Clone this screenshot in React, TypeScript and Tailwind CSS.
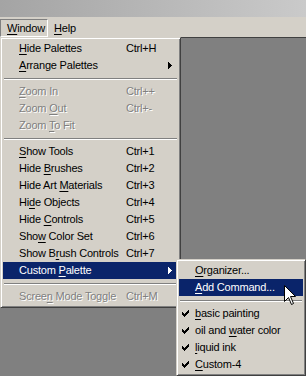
import React from 'react';

type Row =
  | { kind: 'sep' }
  | { kind: 'item'; label: string; key: number; shortcut?: string; arrow?: boolean; disabled?: boolean; active?: boolean };

const mainItems: Row[] = [
  { kind: 'item', label: 'Hide Palettes', key: 0, shortcut: 'Ctrl+H' },
  { kind: 'item', label: 'Arrange Palettes', key: 0, arrow: true },
  { kind: 'sep' },
  { kind: 'item', label: 'Zoom In', key: 0, shortcut: 'Ctrl++', disabled: true },
  { kind: 'item', label: 'Zoom Out', key: 5, shortcut: 'Ctrl+-', disabled: true },
  { kind: 'item', label: 'Zoom To Fit', key: 5, disabled: true },
  { kind: 'sep' },
  { kind: 'item', label: 'Show Tools', key: 0, shortcut: 'Ctrl+1' },
  { kind: 'item', label: 'Hide Brushes', key: 5, shortcut: 'Ctrl+2' },
  { kind: 'item', label: 'Hide Art Materials', key: 9, shortcut: 'Ctrl+3' },
  { kind: 'item', label: 'Hide Objects', key: 2, shortcut: 'Ctrl+4' },
  { kind: 'item', label: 'Hide Controls', key: 5, shortcut: 'Ctrl+5' },
  { kind: 'item', label: 'Show Color Set', key: 3, shortcut: 'Ctrl+6' },
  { kind: 'item', label: 'Show Brush Controls', key: 6, shortcut: 'Ctrl+7' },
  { kind: 'item', label: 'Custom Palette', key: 7, arrow: true, active: true },
  { kind: 'sep' },
  { kind: 'item', label: 'Screen Mode Toggle', key: 5, shortcut: 'Ctrl+M', disabled: true },
];

const subItems: { label: string; key: number; checked?: boolean; active?: boolean; sepAfter?: boolean }[] = [
  { label: 'Organizer...', key: 0 },
  { label: 'Add Command...', key: 0, active: true, sepAfter: true },
  { label: 'basic painting', key: 0, checked: true },
  { label: 'oil and water color', key: 8, checked: true },
  { label: 'liquid ink', key: 0, checked: true },
  { label: 'Custom-4', key: 0, checked: true },
];

// label with its accelerator letter underlined
const Accel = ({ text, at }: { text: string; at: number }) => (
  <span className="whitespace-pre">
    {text.slice(0, at)}
    <span className="underline decoration-1 underline-offset-[2px]">{text[at]}</span>
    {text.slice(at + 1)}
  </span>
);

const Separator = () => (
  <div className="h-[9px] flex items-center px-[1px]">
    <div className="w-full h-[2px] border-t border-t-[#808080] border-b border-b-white" />
  </div>
);

const Arrow = ({ white }: { white?: boolean }) => (
  <svg width="4" height="7" viewBox="0 0 4 7" className="shrink-0">
    <path d="M0 0h1v7H0zM1 1h1v5H1zM2 2h1v3H2zM3 3h1v1H3z" fill={white ? '#fff' : '#000'} />
  </svg>
);

// classic 7x7 pixel check mark
const Check = ({ white }: { white?: boolean }) => (
  <svg width="7" height="7" viewBox="0 0 7 7" className="shrink-0" shapeRendering="crispEdges">
    <path
      d="M6 0h1v1H6zM5 1h2v1H5zM0 2h1v1H0zM4 2h3v1H4zM0 3h2v1H0zM3 3h3v1H3zM0 4h5v1H0zM1 5h3v1H1zM2 6h1v1H2z"
      fill={white ? '#fff' : '#000'}
    />
  </svg>
);

const menuFrame =
  'absolute bg-[#d4d0c8] border border-t-[#d4d0c8] border-l-[#d4d0c8] border-r-[#404040] border-b-[#404040] p-[2px] shadow-[inset_1px_1px_0_#fff,inset_-1px_-1px_0_#808080]';

const App: React.FC = () => {
  return (
    <div className="relative w-[306px] h-[376px] overflow-hidden flex flex-col bg-[#808080] text-[11px] leading-none tracking-[-0.2px] text-black [font-family:'Liberation_Sans',Arial,sans-serif]">
      {/* title strip */}
      <div className="h-[17px] shrink-0 bg-gradient-to-r from-[#a4a4a4] to-[#cacaca]" />

      {/* menu bar */}
      <div className="h-[20px] shrink-0 bg-[#d4d0c8] flex items-end gap-[1px]">
        <div className="h-[18px] w-[48px] flex items-center pl-[6px] border border-t-[#808080] border-l-[#808080] border-r-white border-b-white">
          <Accel text="Window" at={0} />
        </div>
        <div className="h-[18px] flex items-center pl-[5px]">
          <Accel text="Help" at={0} />
        </div>
      </div>

      {/* workspace */}
      <div className="flex-1 bg-[#808080] border-t border-t-[#404040]" />

      {/* Window menu */}
      <div className={`${menuFrame} left-0 top-[37px] w-[181px]`}>
        {mainItems.map((r, i) =>
          r.kind === 'sep' ? (
            <Separator key={i} />
          ) : (
            <div
              key={i}
              className={`h-[17px] flex items-center pl-[16px] pr-[6px] ${
                r.active ? 'bg-[#0a246a] text-white' : r.disabled ? 'text-[#808080] [text-shadow:1px_1px_0_#fff]' : ''
              }`}
            >
              <div className="w-[107px] shrink-0">
                <Accel text={r.label} at={r.key} />
              </div>
              <div className="flex-1">{r.shortcut}</div>
              {r.arrow && <Arrow white={r.active} />}
            </div>
          )
        )}
      </div>

      {/* Custom Palette submenu */}
      <div className={`${menuFrame} left-[176px] top-[259px] w-[130px]`}>
        {subItems.map((s, i) => (
          <React.Fragment key={i}>
            <div className={`h-[17px] flex items-center pl-[3px] ${s.active ? 'bg-[#0a246a] text-white' : ''}`}>
              <div className="w-[13px] shrink-0 flex items-center">{s.checked && <Check white={s.active} />}</div>
              <Accel text={s.label} at={s.key} />
            </div>
            {s.sepAfter && <Separator />}
          </React.Fragment>
        ))}
      </div>

      {/* mouse pointer */}
      <svg width="13" height="21" viewBox="0 0 13 21" className="absolute left-[284px] top-[285px]">
        <path d="M0.5 0.5V16.5L4.5 12.5L7.5 19.5L9.5 18.5L6.5 11.5H11.5Z" fill="#fff" stroke="#000" strokeWidth="1" strokeLinejoin="miter" />
      </svg>
    </div>
  );
};

export default App;
